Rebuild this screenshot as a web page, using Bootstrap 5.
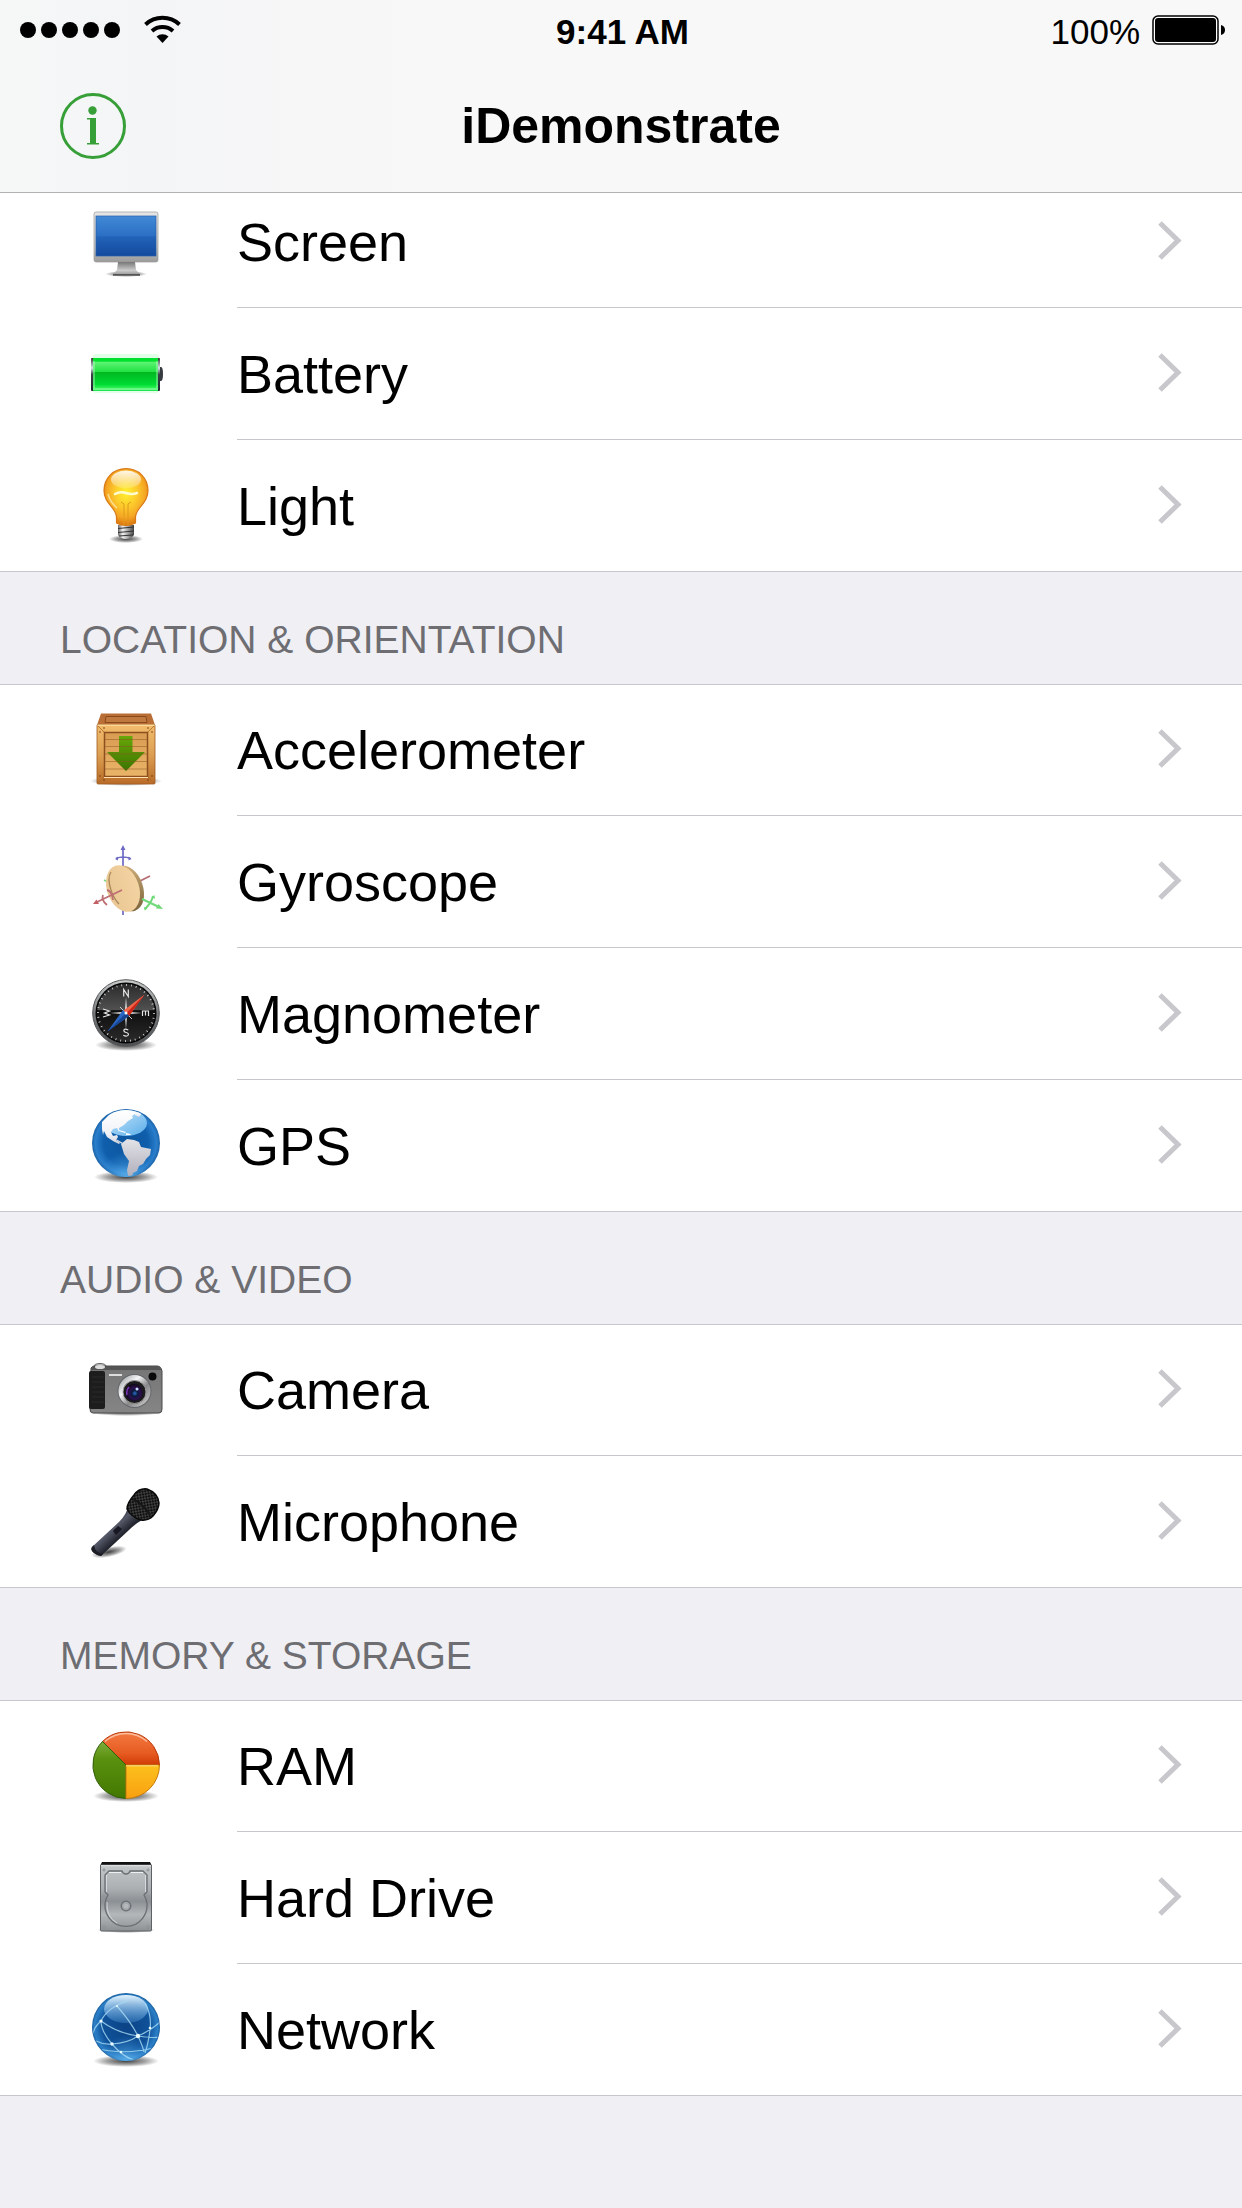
<!DOCTYPE html>
<html lang="en">
<head>
<meta charset="utf-8">
<meta name="viewport" content="width=device-width, initial-scale=1">
<title>iDemonstrate</title>
<link href="https://cdn.jsdelivr.net/npm/bootstrap@5.3.0/dist/css/bootstrap.min.css" rel="stylesheet">
<style>
  body { background: #efeff4; color: #000; font-family: "Liberation Sans", Arial, sans-serif; }
  .top-bar { background: linear-gradient(90deg, #f6f7f7 0, #f4f5f6 12%, #f8f8f8 38%); border-bottom: 1px solid #b2b2b2; }
  .status-row { height: 60px; padding: 0 17px 0 20px; font-size: 35px; line-height: 40px; }
  .status-row > * { flex: 1 1 0; }
  .status-row .clock, .status-row .percent { padding-top: 3px; }
  .title-row { height: 132px; padding: 0 60px; }
  .title-row > * { flex: 1 1 0; }
  .title-row h1 { font-size: 50px; line-height: 56px; }
  .main-list { padding-top: 176px; }
  .group-title { color: #6d6d72; font-size: 39px; line-height: 48px; padding: 44px 60px 20px; }
  .rows { border-radius: 0; background: #fff; }
  .rows.ruled { box-shadow: inset 0 1px #c8c7cc; }
  .entry { height: 132px; padding-left: 88px; color: #000; text-decoration: none; }
  .entry:last-child { box-shadow: inset 0 -1px #c8c7cc; }
  .entry-icon { width: 76px; height: 76px; flex: none; margin-right: 73px; }
  .entry-body { border-bottom: 1px solid #c8c7cc; padding: 0 60px 2px 0; }
  .entry:last-child .entry-body { border-color: transparent; }
  .entry-text { font-size: 54px; line-height: 62px; padding-top: 3px; }
  .chev { width: 24px; height: 40px; fill: none; stroke: #c7c7cc; stroke-width: 5; }
</style>
</head>
<body>
<svg width="0" height="0" class="position-absolute" aria-hidden="true">
  <defs>
    <symbol id="chev" viewBox="0 0 24 40"><path d="M2 2 20 19.500 2 37"/></symbol>
    <linearGradient id="gFrame" x2="0" y2="1"><stop stop-color="#e6e6e6"/><stop offset=".7" stop-color="#c4c4c4"/><stop offset="1" stop-color="#9a9a9a"/></linearGradient>
    <linearGradient id="gScreen" x2="0" y2="1"><stop stop-color="#4189d6"/><stop offset=".5" stop-color="#2b6fc4"/><stop offset=".52" stop-color="#2263b8"/><stop offset="1" stop-color="#134a9f"/></linearGradient>
    <linearGradient id="gNeck" x2="0" y2="1"><stop stop-color="#777"/><stop offset=".6" stop-color="#ccc"/><stop offset="1" stop-color="#888"/></linearGradient>
    <linearGradient id="gBatt" x2="0" y2="1"><stop stop-color="#00df2c"/><stop offset=".1" stop-color="#00e22d"/><stop offset=".12" stop-color="#5df474"/><stop offset=".42" stop-color="#22e242"/><stop offset=".44" stop-color="#00b820"/><stop offset=".8" stop-color="#00dc34"/><stop offset=".9" stop-color="#2cf052"/><stop offset=".94" stop-color="#8fffa6"/><stop offset="1" stop-color="#00dc34"/></linearGradient>
    <linearGradient id="gCap" x2="0" y2="1"><stop stop-color="#333"/><stop offset=".3" stop-color="#d5e0e8"/><stop offset=".5" stop-color="#3a4045"/><stop offset="1" stop-color="#223"/></linearGradient>
    <radialGradient id="gBulb" cx=".5" cy=".42" r=".55"><stop stop-color="#fff12e"/><stop offset=".45" stop-color="#fccb2c"/><stop offset=".8" stop-color="#f5a623"/><stop offset="1" stop-color="#df7f12"/></radialGradient>
    <linearGradient id="gGloss" x2="0" y2="1"><stop stop-color="#fff" stop-opacity=".9"/><stop offset="1" stop-color="#fff" stop-opacity=".15"/></linearGradient>
    <linearGradient id="gMetal"><stop stop-color="#666"/><stop offset=".3" stop-color="#f4f4f4"/><stop offset=".6" stop-color="#aaa"/><stop offset="1" stop-color="#444"/></linearGradient>
    <linearGradient id="gWood" x2="0" y2="1"><stop stop-color="#f2bd6c"/><stop offset=".5" stop-color="#dda053"/><stop offset="1" stop-color="#b96c28"/></linearGradient>
    <linearGradient id="gWoodIn" x2="0" y2="1"><stop stop-color="#d99c53"/><stop offset="1" stop-color="#e9b468"/></linearGradient>
    <linearGradient id="gArrow" x2="0" y2="1"><stop stop-color="#68a708"/><stop offset="1" stop-color="#3c7400"/></linearGradient>
    <linearGradient id="gDisk"><stop stop-color="#e8c794"/><stop offset="1" stop-color="#f4d3a2"/></linearGradient>
    <linearGradient id="gEdge" x2="0" y2="1"><stop stop-color="#d2b07c"/><stop offset="1" stop-color="#7f683f"/></linearGradient>
    <linearGradient id="gRing" x2="0" y2="1"><stop stop-color="#c9cccc"/><stop offset=".5" stop-color="#777b7d"/><stop offset="1" stop-color="#4c5053"/></linearGradient>
    <linearGradient id="gDial" x2="0" y2="1"><stop stop-color="#2b2b2b"/><stop offset=".44" stop-color="#505050"/><stop offset=".46" stop-color="#0e0e0e"/><stop offset="1" stop-color="#2a2a2a"/></linearGradient>
    <radialGradient id="gSea" cx=".5" cy=".5" r=".5"><stop stop-color="#0e569f"/><stop offset=".65" stop-color="#0f5eac"/><stop offset=".9" stop-color="#2a7ecb"/><stop offset="1" stop-color="#1d64a8"/></radialGradient>
    <radialGradient id="gSeaLow" cx=".5" cy="1.05" r=".42"><stop stop-color="#6fc3f7" stop-opacity=".85"/><stop offset="1" stop-color="#3d95dd" stop-opacity="0"/></radialGradient>
    <linearGradient id="gSeaGloss" x2="1" y2="1"><stop stop-color="#cfe9fb"/><stop offset="1" stop-color="#5aaeea"/></linearGradient>
    <linearGradient id="gLand" x2="0" y2="1"><stop stop-color="#e2e2e8"/><stop offset="1" stop-color="#b0afbb"/></linearGradient>
    <linearGradient id="gLandTop" x2="0" y2="1"><stop stop-color="#fff"/><stop offset=".7" stop-color="#f0f2f6"/><stop offset="1" stop-color="#d4d5de"/></linearGradient>
    <linearGradient id="gCam" x2="0" y2="1"><stop stop-color="#555"/><stop offset=".1" stop-color="#777"/><stop offset="1" stop-color="#858585"/></linearGradient>
    <linearGradient id="gLensRing" x2="1" y2="1"><stop stop-color="#8e9193"/><stop offset=".35" stop-color="#f4f5f6"/><stop offset=".6" stop-color="#888"/><stop offset="1" stop-color="#d8d8d8"/></linearGradient>
    <radialGradient id="gLens" cx=".55" cy=".55" r=".6"><stop stop-color="#2d6fd0"/><stop offset=".3" stop-color="#0b1738"/><stop offset=".55" stop-color="#2c1150"/><stop offset="1" stop-color="#050508"/></radialGradient>
    <linearGradient id="gHandle" gradientUnits="userSpaceOnUse" x1="20" y1="40" x2="32" y2="53"><stop stop-color="#2c2e3a"/><stop offset=".4" stop-color="#555867"/><stop offset="1" stop-color="#22242e"/></linearGradient>
    <pattern id="pMesh" width="4" height="4" patternUnits="userSpaceOnUse" patternTransform="rotate(35)"><rect width="4" height="4" fill="#111"/><path d="M0 1h2M2 3h2" stroke="#6a6a6a"/></pattern>
    <linearGradient id="gRed" x2="0" y2="1"><stop stop-color="#f47a42"/><stop offset=".65" stop-color="#e65b21"/><stop offset="1" stop-color="#d03a05"/></linearGradient>
    <linearGradient id="gGreen" x2="0" y2="1"><stop stop-color="#7cae3c"/><stop offset=".3" stop-color="#5b9110"/><stop offset="1" stop-color="#427800"/></linearGradient>
    <linearGradient id="gYellow" x2="0" y2="1"><stop stop-color="#fcc11c"/><stop offset="1" stop-color="#f9a011"/></linearGradient>
    <linearGradient id="gDrive" x2="0" y2="1"><stop stop-color="#c4c7c9"/><stop offset=".35" stop-color="#adb0b3"/><stop offset=".55" stop-color="#8b9094"/><stop offset=".75" stop-color="#b4b7b9"/><stop offset="1" stop-color="#8e9193"/></linearGradient>
    <radialGradient id="gNet" cx=".5" cy=".5" r=".5"><stop stop-color="#0c4385"/><stop offset=".7" stop-color="#0f529a"/><stop offset=".93" stop-color="#2b80c8"/><stop offset="1" stop-color="#1c5f9f"/></radialGradient>
    <linearGradient id="gNetGloss" x2="0" y2="1"><stop stop-color="#e4f3fd"/><stop offset="1" stop-color="#4f9bdc" stop-opacity=".35"/></linearGradient>
    <radialGradient id="gShade"><stop stop-color="#000" stop-opacity=".75"/><stop offset=".6" stop-color="#000" stop-opacity=".35"/><stop offset="1" stop-color="#000" stop-opacity="0"/></radialGradient>
    <clipPath id="cBall"><circle cx="38" cy="35" r="33"/></clipPath>
  </defs>
</svg>

<header class="top-bar fixed-top">
  <div class="status-row d-flex align-items-center">
    <div class="d-flex align-items-center">
      <svg width="162" height="30" viewBox="0 0 162 30" role="img" aria-label="Full signal, Wi-Fi">
        <g><circle cx="8" cy="15" r="8"/><circle cx="29" cy="15" r="8"/><circle cx="50" cy="15" r="8"/><circle cx="71" cy="15" r="8"/><circle cx="92" cy="15" r="8"/></g>
        <g fill="none" stroke="#000" stroke-width="4"><path d="M125.500 9.500a25 25 0 0 1 34 0"/><path d="M132 16a16 16 0 0 1 21 0"/></g>
        <path d="M136.500 21.500a9 9 0 0 1 12 0L142.500 28z"/>
      </svg>
    </div>
    <div class="clock fw-bold text-center">9:41 AM</div>
    <div class="d-flex align-items-center justify-content-end">
      <span class="percent me-2">100%</span>
      <svg class="ms-1" width="73" height="30" viewBox="0 0 73 30" role="img" aria-label="Battery full"><rect x="1" y="1" width="65" height="28" rx="5" fill="#fff" stroke="#000" stroke-width="1.500"/><rect x="3" y="3" width="61" height="24" rx="3"/><path d="M69 10q4 1 4 5t-4 5z"/></svg>
    </div>
  </div>
  <div class="title-row d-flex align-items-center">
    <div>
      <button type="button" class="btn p-0 border-0 d-block" aria-label="About">
        <svg class="d-block" width="66" height="66" viewBox="0 0 66 66" fill="#379f38"><circle cx="33" cy="33" r="31.500" fill="none" stroke="#379f38" stroke-width="3"/><circle cx="32.500" cy="17.500" r="4.200"/><path d="M27 25h9v25h3v1.500H27V50h3V26.500h-3z"/></svg>
      </button>
    </div>
    <h1 class="m-0 fw-bold text-center">iDemonstrate</h1>
    <div></div>
  </div>
</header>

<main class="main-list">
  <section aria-label="Device">
    <div class="rows list-group">
      <a href="#screen" class="entry d-flex align-items-center">
        <svg class="entry-icon" viewBox="0 0 76 76"><ellipse cx="38" cy="70" rx="21" ry="3" fill="url(#gShade)"/><rect x="6" y="8" width="64" height="50" rx="2" fill="url(#gFrame)" stroke="#999" stroke-width=".7"/><rect x="8" y="12" width="60" height="40" fill="url(#gScreen)" stroke="#285fa5" stroke-width=".7"/><path d="M30 58h17l1 8 4 4v2H25v-2l4-4z" fill="url(#gNeck)"/><path d="M25 70h27v1.500H25z" fill="#555"/></svg>
        <div class="entry-body d-flex align-items-center justify-content-between flex-grow-1 h-100"><span class="entry-text">Screen</span><svg class="chev"><use href="#chev"/></svg></div>
      </a>
      <a href="#battery" class="entry d-flex align-items-center">
        <svg class="entry-icon" viewBox="0 0 76 76"><rect x="5" y="18" width="66" height="39" rx="3" fill="#9dffab" opacity=".3"/><path d="M71 31h2q2 0 2 7t-2 7h-2z" fill="#353b40"/><rect x="3" y="22" width="69" height="33" rx="1" fill="url(#gCap)"/><rect x="5" y="22" width="65" height="33" fill="url(#gBatt)"/><path d="M6 25v27M69 25v27" stroke="#d9ffe0" stroke-width="1" opacity=".7"/></svg>
        <div class="entry-body d-flex align-items-center justify-content-between flex-grow-1 h-100"><span class="entry-text">Battery</span><svg class="chev"><use href="#chev"/></svg></div>
      </a>
      <a href="#light" class="entry d-flex align-items-center">
        <svg class="entry-icon" viewBox="0 0 76 76"><ellipse cx="38" cy="71" rx="17" ry="4" fill="url(#gShade)"/><path d="M30 57h16v10q-3 4-8 4t-8-4z" fill="url(#gMetal)"/><path d="M30 60.500 46 59M30 64.500 46 63M31 68l14-1" stroke="#333" stroke-width="1.200"/><path d="M38 .7C25 .7 16 10.500 16 22.500 16 36 28 39 28.500 49v6q9 5 19 0v-6C48 39 60 36 60 22.500 60 10.500 51 .7 38 .7z" fill="url(#gBulb)" stroke="#d97916" stroke-width="1.200"/><path d="M36 57V36l-3-2M40 57V36l3-2" fill="none" stroke="#e09a1d"/><path d="M27 26q5-3 11-1t11 0" fill="none" stroke="#fffbd0" stroke-width="2.500" stroke-linecap="round"/><ellipse cx="38" cy="11.500" rx="15" ry="9" fill="url(#gGloss)"/><path d="M20 26q2 8 9 14" fill="none" stroke="#ffe7a8" stroke-width="1.500" opacity=".8"/></svg>
        <div class="entry-body d-flex align-items-center justify-content-between flex-grow-1 h-100"><span class="entry-text">Light</span><svg class="chev"><use href="#chev"/></svg></div>
      </a>
    </div>
  </section>

  <section>
    <h2 class="group-title m-0 fw-normal">LOCATION &amp; ORIENTATION</h2>
    <div class="rows ruled list-group">
      <a href="#accelerometer" class="entry d-flex align-items-center">
        <svg class="entry-icon" viewBox="0 3 76 76"><ellipse cx="38" cy="72" rx="36" ry="5" fill="url(#gShade)"/><path d="M13 4.500h50l4 11.500H9z" fill="#b86e35"/><path d="M18 7.500h40l1 6H17z" fill="#c07a40" stroke="#8b4a1c"/><rect x="9" y="15.500" width="58" height="59.500" rx="1" fill="url(#gWood)" stroke="#9c5a22" stroke-width=".8"/><path d="M9.500 16.200h57" stroke="#ffe0a5" stroke-width="1.200"/><path d="m10 17 6 6m50-6-6 6M10 74l6-6m50 6-6-6" stroke="#a86729" stroke-width=".8"/><rect x="16.500" y="23.500" width="43" height="44" fill="url(#gWoodIn)" stroke="#8c4f1d" stroke-width="1.500"/><path d="M31 27h13.500v16H57L38 62 19 43h12z" fill="url(#gArrow)"/><path d="M17 30.500h42M17 37.500h42M17 45h42M17 52.500h42M17 60h42" stroke="#8d5520" stroke-width="1" opacity=".5"/><path d="M16 68.500h44" stroke="#ffe0ae"/><g fill="#6e3d13"><circle cx="12" cy="23" r=".8"/><circle cx="16" cy="19" r=".8"/><circle cx="64" cy="23" r=".8"/><circle cx="60" cy="19" r=".8"/><circle cx="12" cy="67" r=".8"/><circle cx="16" cy="71" r=".8"/><circle cx="64" cy="67" r=".8"/><circle cx="60" cy="71" r=".8"/></g></svg>
        <div class="entry-body d-flex align-items-center justify-content-between flex-grow-1 h-100"><span class="entry-text">Accelerometer</span><svg class="chev"><use href="#chev"/></svg></div>
      </a>
      <a href="#gyroscope" class="entry d-flex align-items-center">
        <svg class="entry-icon" viewBox="0 0 76 76"><g fill="none" stroke-width="1.700"><path d="M35 71V4M28 14.500q7-3 14.500 0" stroke="#6d6ac4"/><path d="m52 37 10-5" stroke="#b46a70"/><path d="m16 36 4 2" stroke="#79d880"/></g><path d="m32.500 6 2.500-5 2.500 5zM27 15l3-2.500v4zM43.500 15l-3-2.500v4z" fill="#6d6ac4"/><ellipse cx="39.500" cy="44.500" rx="15.500" ry="23.500" transform="rotate(-19 39.500 44.500)" fill="url(#gEdge)"/><ellipse cx="35" cy="44.500" rx="16" ry="24" transform="rotate(-19 35 44.500)" fill="url(#gDisk)"/><path d="M23 28q-4 6 0 18 3 9 8 14" fill="none" stroke="#a98656" stroke-width="1.200"/><g fill="none"><path d="M34 46 8 58.500M15 51q-2 5 4 10M19 46q5 1 6 10" stroke="#bd6f74" stroke-width="1.800"/><path d="m54 55 17 8M65 52q-1 6-8 13" stroke="#70d979" stroke-width="2"/></g><path d="m5 60 3.500-4.500L11 60z" fill="#c45f65"/><path d="m75 65-7-.5 2.500-4.500zM64 53l2.500-2 .5 4zM56 63l.5 3.500 3-2z" fill="#70d979"/></svg>
        <div class="entry-body d-flex align-items-center justify-content-between flex-grow-1 h-100"><span class="entry-text">Gyroscope</span><svg class="chev"><use href="#chev"/></svg></div>
      </a>
      <a href="#magnometer" class="entry d-flex align-items-center">
        <svg class="entry-icon" viewBox="0 0 76 76"><ellipse cx="38" cy="69" rx="31" ry="6" fill="url(#gShade)"/><circle cx="38" cy="37" r="33.300" fill="url(#gRing)" stroke="#555" stroke-width="1"/><circle cx="38" cy="37" r="30.500" fill="#060606"/><circle cx="38" cy="37" r="29" fill="url(#gDial)"/><circle cx="38" cy="37" r="28" fill="none" stroke="#ddd" stroke-width="2" stroke-dasharray=".8 4.086"/><path d="m38 21 1.200 14.800L54 37l-14.800 1.200L38 53l-1.200-14.800L22 37l14.800-1.200z" fill="#ddd"/><path d="m32 31 12 12M44 31 32 43" stroke="#ccc"/><g fill="none" stroke="#e4e4e4" stroke-width="1.200"><path d="M35.700 20.500v-7l4.600 7v-7M40.300 54q-4-2-4.500.5 0 1.500 2.300 2 2.700.7 2.200 2.500-1.500 2-5 .3M54.500 40v-5h6v5M57.500 35v4.500M15 33l6.500 2-5 2 5 2-6.500 2"/></g><path d="M56.500 18.500 41 40l-5.500-5.500z" fill="#f06548"/><path d="M56.500 18.500 41 40l-2.700-2.800z" fill="#cc2418"/><path d="M19.500 55.500 35 34l6 6z" fill="#2a67c5"/><path d="M19.500 55.500 38 37l3 3z" fill="#174591"/><circle cx="38" cy="37" r="1.500" fill="#fff"/></svg>
        <div class="entry-body d-flex align-items-center justify-content-between flex-grow-1 h-100"><span class="entry-text">Magnometer</span><svg class="chev"><use href="#chev"/></svg></div>
      </a>
      <a href="#gps" class="entry d-flex align-items-center">
        <svg class="entry-icon" viewBox="0 0 76 76"><ellipse cx="38" cy="69" rx="32" ry="6" fill="url(#gShade)"/><circle cx="38" cy="35" r="34" fill="url(#gSea)"/><circle cx="38" cy="35" r="34" fill="url(#gSeaLow)"/><ellipse cx="38" cy="15" rx="21" ry="13" fill="url(#gSeaGloss)"/><g clip-path="url(#cBall)"><g fill="url(#gLandTop)"><path d="M14 14 22 6l8-4 14 0 4 3-4 3 1 2-5 3-4 4-5 3v4l-2-4-4 1-2 3 2 4 4-1 1 2-2 3 4 3-1 1-6-3-6-4-3-6-1 4-1-6z"/><path d="m45 2 9 3-3 4-4-2z"/></g><path d="m31 22 7 2-1 1-6-2zM38 25l5 1-1 1h-4z" fill="#fff"/><path d="m33 36 6-5 7 1 5 2 2 5 10 2-1 6-4 4-3 5-4 2-2 5-4 2-1 4-4-1-1-6 2-9-5-7z" fill="url(#gLand)"/><path d="m28 31 7 4-1 1-5-3z" fill="#d8d9e0"/></g></svg>
        <div class="entry-body d-flex align-items-center justify-content-between flex-grow-1 h-100"><span class="entry-text">GPS</span><svg class="chev"><use href="#chev"/></svg></div>
      </a>
    </div>
  </section>

  <section>
    <h2 class="group-title m-0 fw-normal">AUDIO &amp; VIDEO</h2>
    <div class="rows ruled list-group">
      <a href="#camera" class="entry d-flex align-items-center">
        <svg class="entry-icon" viewBox="0 0 76 76"><ellipse cx="38" cy="60" rx="38" ry="4" fill="url(#gShade)"/><ellipse cx="12" cy="14" rx="6" ry="2.500" fill="#bbb" stroke="#666"/><path d="M3 16q1-2 4-2h62q4 0 5 5v38q0 4-3 4H5q-3 0-3-4z" fill="url(#gCam)" stroke="#4a4a4a"/><path d="M5 15h64q3 0 4 3H3z" fill="#555"/><ellipse cx="12" cy="15" rx="5" ry="2" fill="#ddd"/><rect x="1" y="19" width="16" height="38" rx="2" fill="#1d1d1d"/><path d="M4 25h12M4 30h12M4 35h12M4 40h12M4 45h12M4 50h12" stroke="#2b2b2b"/><rect x="21" y="22" width="13" height="2" fill="#ddd"/><circle cx="64.500" cy="24.500" r="4" fill="#0a0a0a"/><circle cx="46.500" cy="39" r="17" fill="#63666a"/><circle cx="46.500" cy="39" r="16" fill="url(#gLensRing)"/><circle cx="46.500" cy="40" r="11.500" fill="#1b1b1d" stroke="#999" stroke-width="1"/><circle cx="46" cy="40.500" r="8.500" fill="url(#gLens)"/><circle cx="49" cy="37" r="1.500" fill="#cde0ff"/><path d="M39 43q-1-5 2-8" fill="none" stroke="#7d36b8" stroke-width="1.500"/></svg>
        <div class="entry-body d-flex align-items-center justify-content-between flex-grow-1 h-100"><span class="entry-text">Camera</span><svg class="chev"><use href="#chev"/></svg></div>
      </a>
      <a href="#microphone" class="entry d-flex align-items-center">
        <svg class="entry-icon" viewBox="0 0 76 76"><ellipse cx="21" cy="68" rx="18" ry="5" fill="url(#gShade)" transform="rotate(-12 21 68)"/><path d="M40 22q-1 8-9 16L4 63q-2 3 2 6t7 3l28-26q6-6 13-10z" fill="url(#gHandle)"/><path d="M4 63q-2 3 2 6t7 3l2-2Q7 69 6 61z" fill="#1b1c24"/><path d="m25 47 5-5 4 3-6 6z" fill="#161720"/><path d="M39 25q0-6 7-14 5-7 13-6 11 4 12 14 0 6-6 13-5 5-12 4-10-3-14-11z" fill="url(#pMesh)" stroke="#090909" stroke-width="1.500"/><path d="M45 15q9 4 17 16" fill="none" stroke="#161616" stroke-width="2"/></svg>
        <div class="entry-body d-flex align-items-center justify-content-between flex-grow-1 h-100"><span class="entry-text">Microphone</span><svg class="chev"><use href="#chev"/></svg></div>
      </a>
    </div>
  </section>

  <section>
    <h2 class="group-title m-0 fw-normal">MEMORY &amp; STORAGE</h2>
    <div class="rows ruled list-group">
      <a href="#ram" class="entry d-flex align-items-center">
        <svg class="entry-icon" viewBox="0 0 76 76"><ellipse cx="38" cy="68" rx="33" ry="6" fill="url(#gShade)"/><path d="M38 37 14.500 13.500A33.500 33.500 0 0 1 71.500 37z" fill="url(#gRed)" stroke="#b93a0b"/><path d="M38 37v33.500A33.500 33.500 0 0 1 14.500 13.500z" fill="url(#gGreen)" stroke="#33600a"/><path d="M38 37h33.500A33.500 33.500 0 0 1 38 70.500z" fill="url(#gYellow)" stroke="#c67c0c"/><path d="M17 13.500a31.500 31.500 0 0 1 42 0" fill="none" stroke="#ffd0b5" stroke-width="1.500" opacity=".8"/><path d="M38 37.800h32" stroke="#ffe089" stroke-width="1"/></svg>
        <div class="entry-body d-flex align-items-center justify-content-between flex-grow-1 h-100"><span class="entry-text">RAM</span><svg class="chev"><use href="#chev"/></svg></div>
      </a>
      <a href="#hard-drive" class="entry d-flex align-items-center">
        <svg class="entry-icon" viewBox="0 0 76 76"><ellipse cx="38" cy="70" rx="29" ry="3" fill="url(#gShade)"/><path d="M14 2h48l2 4H12z" fill="#111"/><rect x="12.500" y="5" width="51" height="66" rx="1" fill="url(#gDrive)" stroke="#5e6265"/><path d="M13 5.700h50" stroke="#eee"/><path d="M21 11h13q1 3 4 3t4-3h13l4 4v17l-3 3 2 4A21 21 0 1 1 18 39l2-4-3-3V15z" fill="none" stroke="#6a6f73" stroke-width="1.300"/><path d="M21 12.500h12M43 12.500h12" stroke="#eef0f1"/><path d="M18.500 15v17M57.500 15v17M19 42q-1 15 10 21" fill="none" stroke="#dfe2e4" stroke-width=".8"/><circle cx="38" cy="46" r="4.800" fill="#a0a5a8" stroke="#696e72" stroke-width="1.300"/><circle cx="38" cy="46" r="2.500" fill="#b5b8ba"/><g fill="#e0e0e0" stroke="#6b7074" stroke-width=".7"><circle cx="16" cy="10" r="1"/><circle cx="60" cy="10" r="1"/><circle cx="16" cy="36" r="1"/><circle cx="60" cy="36" r="1"/><circle cx="16" cy="67" r="1"/><circle cx="60" cy="67" r="1"/></g></svg>
        <div class="entry-body d-flex align-items-center justify-content-between flex-grow-1 h-100"><span class="entry-text">Hard Drive</span><svg class="chev"><use href="#chev"/></svg></div>
      </a>
      <a href="#network" class="entry d-flex align-items-center">
        <svg class="entry-icon" viewBox="0 0 76 76"><ellipse cx="38" cy="69" rx="33" ry="6" fill="url(#gShade)"/><circle cx="38" cy="35" r="34" fill="url(#gNet)"/><circle cx="38" cy="35" r="34" fill="url(#gSeaLow)"/><ellipse cx="38" cy="17" rx="22" ry="14" fill="url(#gNetGloss)"/><g fill="none" stroke="#a9dcf5" stroke-width="1.200" clip-path="url(#cBall)" opacity=".8"><path d="M13 29q16 12 37 15t24 0M13 29q-7 6-8 13M13 29q6-13 26-20M13 29q0 10 11 23t22 16M24 52q16-1 26-8 14-6 23-15M29 14q14 16 21 30 5 11 6 16M7 56q30 8 62-1M57 11q7 12 5 27t-5 23M24 52q-8 1-16-3"/></g><g fill="#e7faff"><circle cx="13" cy="29" r="1.600"/><circle cx="50" cy="44" r="2.200"/><circle cx="24" cy="52" r="1.700"/><circle cx="33" cy="60" r="1.300"/><circle cx="62" cy="36" r="1.300"/><circle cx="29" cy="14" r="1.100"/></g></svg>
        <div class="entry-body d-flex align-items-center justify-content-between flex-grow-1 h-100"><span class="entry-text">Network</span><svg class="chev"><use href="#chev"/></svg></div>
      </a>
    </div>
  </section>
</main>
<script src="https://cdn.jsdelivr.net/npm/bootstrap@5.3.0/dist/js/bootstrap.bundle.min.js"></script>
</body>
</html>
